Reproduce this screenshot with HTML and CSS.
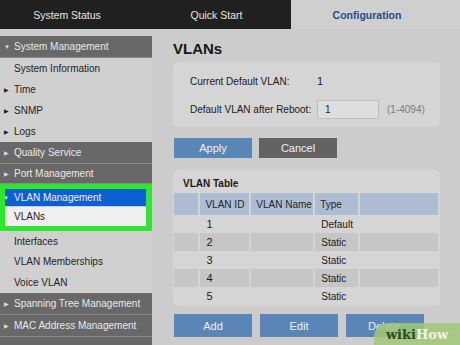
FILE: index.html
```html
<!DOCTYPE html>
<html lang="en">

<head>
  <meta charset="UTF-8" />
  <title>VLANs</title>
  <link rel="stylesheet" href="styles.css">
</head>

<body>
  <div class="topbar">
    <div class="tab tab-status">System Status</div>
    <div class="tab tab-quick">Quick Start</div>
    <div class="tab tab-config">Configuration</div>
  </div>

  <div class="layout">
    <div class="sidebar">
      <div class="group open"><span class="arrow">&#9660;</span>System Management</div>
      <div class="item">System Information</div>
      <div class="item"><span class="arrow">&#9654;</span>Time</div>
      <div class="item"><span class="arrow">&#9654;</span>SNMP</div>
      <div class="item"><span class="arrow">&#9654;</span>Logs</div>
      <div class="group"><span class="arrow">&#9654;</span>Quality Service</div>
      <div class="group short"><span class="arrow">&#9654;</span>Port Management</div>
      <div class="highlight">
        <div class="group active"><span class="arrow">&#9660;</span>VLAN Management</div>
        <div class="item current">VLANs</div>
      </div>
      <div class="item first">Interfaces</div>
      <div class="item">VLAN Memberships</div>
      <div class="item">Voice VLAN</div>
      <div class="group"><span class="arrow">&#9654;</span>Spanning Tree Management</div>
      <div class="group"><span class="arrow">&#9654;</span>MAC Address Management</div>
      <div class="group"></div>
    </div>

    <div class="main">
      <h1 class="title">VLANs</h1>

      <div class="panel settings">
        <div class="field">
          <span class="label">Current Default VLAN:</span>
          <span class="value">1</span>
        </div>
        <div class="field">
          <span class="label">Default VLAN after Reboot:</span>
          <input class="input" type="text" value="1">
          <span class="hint">(1-4094)</span>
        </div>
      </div>

      <div class="actions">
        <button class="button blue">Apply</button>
        <button class="button dark">Cancel</button>
      </div>

      <div class="panel table-panel">
        <div class="table-title">VLAN Table</div>
        <table class="vlan-table">
          <thead>
            <tr>
              <th class="c-sel"></th>
              <th class="c-id">VLAN ID</th>
              <th class="c-name">VLAN Name</th>
              <th class="c-type">Type</th>
              <th class="c-rest"></th>
            </tr>
          </thead>
          <tbody>
            <tr><td></td><td class="num">1</td><td></td><td>Default</td><td></td></tr>
            <tr class="stripe"><td></td><td class="num">2</td><td></td><td>Static</td><td></td></tr>
            <tr><td></td><td class="num">3</td><td></td><td>Static</td><td></td></tr>
            <tr class="stripe"><td></td><td class="num">4</td><td></td><td>Static</td><td></td></tr>
            <tr><td></td><td class="num">5</td><td></td><td>Static</td><td></td></tr>
          </tbody>
        </table>
      </div>

      <div class="actions bottom">
        <button class="button blue">Add</button>
        <button class="button blue">Edit</button>
        <button class="button blue delete">Delete</button>
      </div>
    </div>
  </div>

  <div class="watermark"><span class="wiki">wiki</span><span class="how">How</span></div>
</body>

</html>
```

FILE: styles.css
```css
body {
  margin: 0;
  width: 460px;
  height: 345px;
  overflow: hidden;
  background-color: #cccccc;
  font-family: 'Liberation Sans', Arial, sans-serif;
  color: #1a1a1a;
  position: relative;
}

.topbar {
  display: flex;
  height: 29px;
}

.tab {
  display: flex;
  align-items: center;
  justify-content: center;
  font-size: 10.5px;
  color: #e6e6e6;
  background-color: #202020;
}

.tab-status {
  width: 134px;
}

.tab-quick {
  width: 157px;
  padding-left: 8px;
  box-sizing: border-box;
}

.tab-config {
  flex: 1;
  padding-right: 17px;
  background-color: #cfcfcf;
  color: #2b4a8c;
  font-weight: bold;
}

.layout {
  display: flex;
  padding-top: 7px;
}

.sidebar {
  width: 152px;
  flex: 0 0 152px;
  background-color: #d0d0d0;
  font-size: 10px;
  white-space: nowrap;
}

.group,
.item {
  display: flex;
  align-items: center;
  padding-left: 14px;
  position: relative;
}

.group {
  height: 21px;
  background-color: #686868;
  color: #e8e8e8;
  border-bottom: 1px solid #8a8a8a;
}

.group.short {
  height: 19px;
}

.item {
  height: 21px;
  background-color: #d0d0d0;
  color: #1e1e1e;
}

.item.first {
  height: 20px;
}

.arrow {
  position: absolute;
  left: 4px;
  font-size: 6px;
}

.group .arrow {
  color: #dcdcdc;
}

.highlight {
  border: 5px solid #2ee62e;
  border-right-width: 6px;
}

.group.active {
  height: 17px;
  padding-left: 9px;
  background-color: #0d5fd4;
  color: #f2f2f2;
  border-bottom: 1px solid #cfcfcf;
}

.group.active .arrow {
  left: -2px;
}

.item.current {
  height: 19px;
  padding-left: 9px;
  background-color: #efefef;
}

.main {
  flex: 1;
  padding-left: 21px;
  padding-right: 20px;
}

.title {
  margin: 4px 0 0;
  height: 22px;
  font-size: 15px;
  font-weight: bold;
  color: #151515;
}

.panel {
  background-color: #d5d5d5;
  border-radius: 5px;
}

.settings {
  height: 65px;
  padding: 9px 0 0 17px;
  box-sizing: border-box;
  display: flex;
  flex-direction: column;
  gap: 8px;
  font-size: 10px;
  white-space: nowrap;
}

.field {
  display: flex;
  align-items: center;
  height: 20px;
}

.label {
  width: 127px;
}

.value {
  font-size: 11px;
}

.input {
  width: 62px;
  height: 19px;
  box-sizing: border-box;
  border: 1px solid #bdbdbd;
  background-color: #dedede;
  font-family: inherit;
  font-size: 10px;
  padding: 0 0 0 7px;
  color: #222;
}

.hint {
  margin-left: 8px;
  color: #7c7c7c;
}

.actions {
  display: flex;
  gap: 7px;
  margin-top: 11px;
  padding-left: 1px;
}

.button {
  width: 78px;
  height: 20px;
  border: none;
  font-family: inherit;
  font-size: 11px;
  color: #eef2f7;
  padding: 0;
}

.blue {
  background-color: #5a85b7;
}

.dark {
  background-color: #636363;
}

.table-panel {
  margin-top: 12px;
  height: 136px;
  padding: 8px 0 0 1px;
  box-sizing: border-box;
}

.table-title {
  font-size: 10px;
  font-weight: bold;
  padding-left: 9px;
  height: 15px;
}

.vlan-table {
  border-collapse: separate;
  border-spacing: 2px 0;
  margin-left: -2px;
  font-size: 10px;
  white-space: nowrap;
  table-layout: fixed;
}

.vlan-table th {
  height: 22px;
  background-color: #adbdd1;
  font-weight: normal;
  text-align: left;
  padding: 0 0 0 5px;
  color: #1d2430;
}

.vlan-table td {
  height: 18px;
  padding: 0 0 0 6px;
}

.vlan-table .stripe td {
  background-color: #c6c6c6;
}

.c-sel {
  width: 20px;
}

.c-id {
  width: 44px;
}

.c-name {
  width: 57px;
}

.c-type {
  width: 38px;
}

.c-rest {
  width: 75px;
}

.num {
  font-size: 11px;
}

.actions.bottom {
  margin-top: 8px;
  gap: 8px;
}

.actions.bottom .button {
  height: 23px;
}

.delete {
  text-align: left;
  padding-left: 22px;
}

.watermark {
  position: absolute;
  right: 0;
  bottom: 0;
  width: 86px;
  height: 22px;
  background-color: rgba(160, 200, 120, 0.85);
  border-top-left-radius: 14px;
  display: flex;
  align-items: center;
  justify-content: center;
  font-family: 'DejaVu Serif', serif;
  font-weight: bold;
  font-size: 13px;
}

.wiki {
  color: #2f4a1e;
}

.how {
  color: #f0f5ea;
}
```
